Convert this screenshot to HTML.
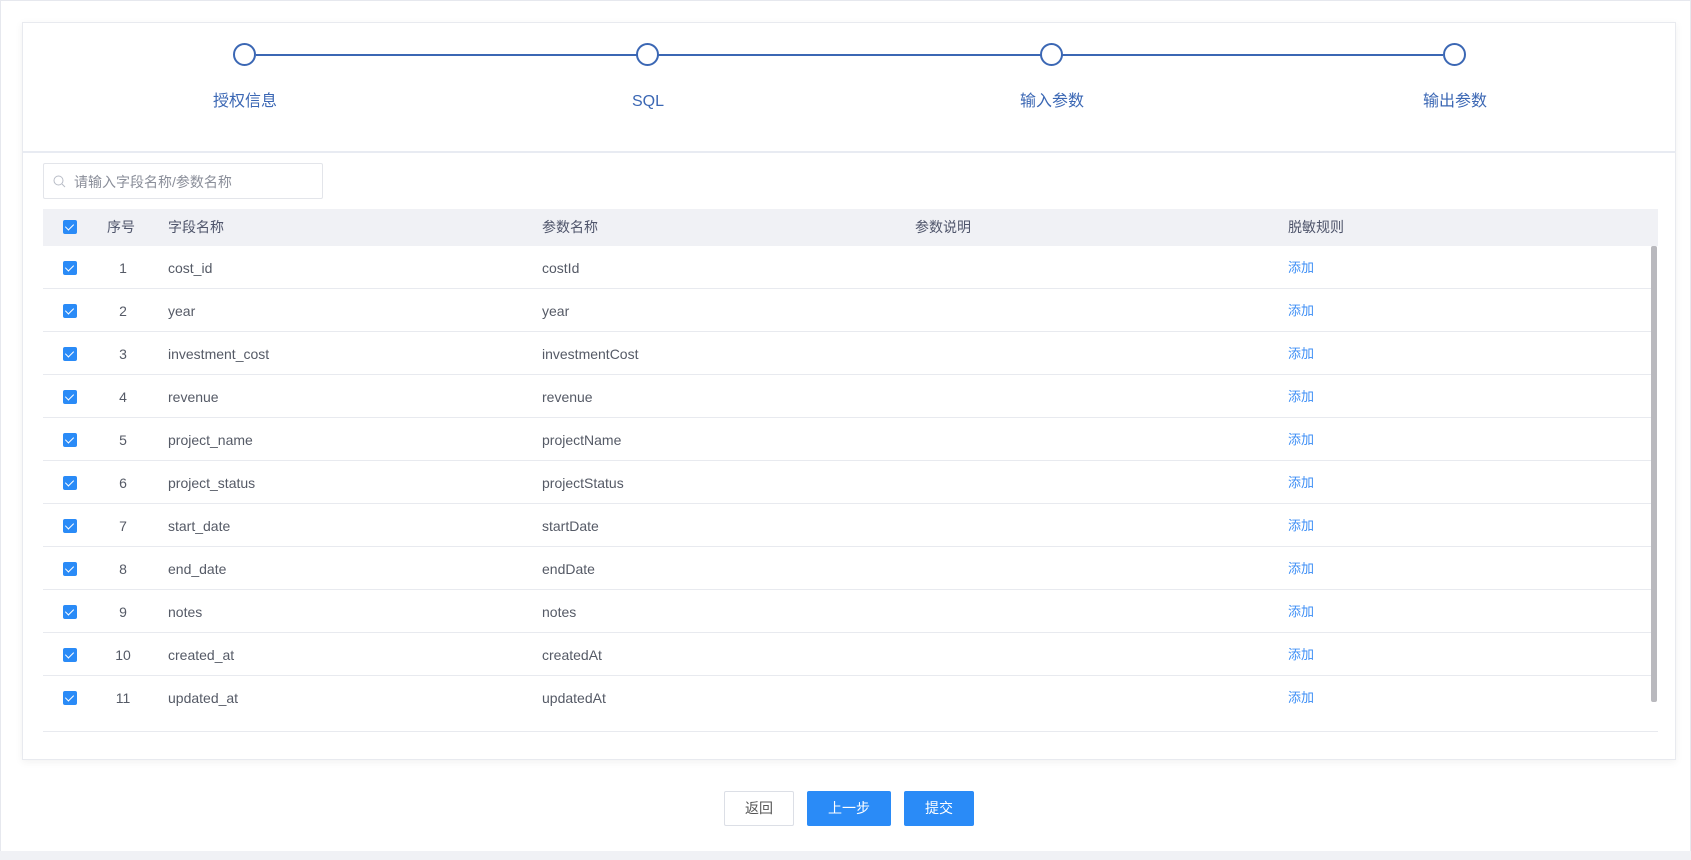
<!DOCTYPE html>
<html><head><meta charset="utf-8"><style>
*{margin:0;padding:0;box-sizing:border-box}
body{width:1691px;height:860px;background:#fff;font-family:"Liberation Sans","Noto Sans CJK SC",sans-serif;position:relative;overflow:hidden}
.frame{position:absolute;left:0;top:0;width:1691px;height:851px;border:1px solid #e6e8ee;border-bottom:none}
.bot{position:absolute;left:0;top:851px;width:1691px;height:9px;background:#f0f1f5}
.card{position:absolute;left:22px;top:22px;width:1654px;height:738px;background:#fff;border:1px solid #e8eaef;box-shadow:0 2px 8px rgba(0,0,0,.06)}
.hdr{position:absolute;left:0;top:0;width:100%;height:130px;border-bottom:2px solid #e8ebf2}
.line{position:absolute;top:30.5px;left:233px;width:1187px;height:2px;background:#3b67b4}
.c{position:absolute;top:20px;width:23px;height:23px;border:2px solid #3b67b4;border-radius:50%;background:#fff}
.lbl{position:absolute;top:68px;height:22px;line-height:22px;width:200px;margin-left:-100px;text-align:center;font-size:16px;color:#3b67b4}
.search{position:absolute;left:20px;top:140px;width:280px;height:36px;border:1px solid #e3e5ea;border-radius:2px}
.search span{position:absolute;left:30px;top:8px;line-height:20px;font-size:14px;color:#8a8e99}
.th{position:absolute;left:20px;top:186px;width:1615px;height:37px;background:#f0f1f5}
.th div{position:absolute;top:8px;line-height:20px;font-size:14px;color:#4f556b}
.cb{position:absolute;width:14px;height:14px;background:#2a8bf7;border-radius:2px}
.cb:after{content:"";position:absolute;left:4px;top:2px;width:4px;height:7px;border:solid #fff;border-width:0 1.5px 1.5px 0;transform:rotate(45deg)}
.row{position:absolute;left:20px;width:1608px;height:43px;border-bottom:1px solid #e8eaef}
.row div{position:absolute;top:12px;line-height:20px;font-size:14px;color:#555a66}
.row .n{left:60px;width:40px;text-align:center}
.row .a{color:#3d8ef5;font-size:13px}
.sb{position:absolute;left:1628px;top:223px;width:6px;height:456px;background:#b9b9be;border-radius:2px}
.bl{position:absolute;left:20px;top:708px;width:1615px;height:1px;background:#e8eaef}
.btn{position:absolute;top:791px;height:35px;border-radius:2px;font-size:14px;text-align:center;line-height:33px}
</style></head><body>
<div class="frame"></div><div class="bot"></div>
<div class="card">
<div class="hdr">
<div class="line"></div>
<div class="c" style="left:210px"></div><div class="c" style="left:613px"></div><div class="c" style="left:1017px"></div><div class="c" style="left:1420px"></div>
<div class="lbl" style="left:222px">授权信息</div><div class="lbl" style="left:625px">SQL</div><div class="lbl" style="left:1029px">输入参数</div><div class="lbl" style="left:1432px">输出参数</div>
</div>
<div class="search"><svg style="position:absolute;left:9px;top:11px" width="13" height="13" viewBox="0 0 13 13"><circle cx="5.5" cy="5.5" r="4.5" fill="none" stroke="#b8bcc6" stroke-width="1"/><line x1="9" y1="9" x2="12" y2="12" stroke="#b8bcc6"/></svg><span>请输入字段名称/参数名称</span></div>
<div class="th"><span class="cb" style="left:20px;top:11px"></span><div style="left:64px">序号</div><div style="left:125px">字段名称</div><div style="left:499px">参数名称</div><div style="left:872px">参数说明</div><div style="left:1245px">脱敏规则</div></div>
<div class="row" style="top:223px"><span class="cb" style="left:20px;top:15px"></span><div class="n">1</div><div style="left:125px">cost_id</div><div style="left:499px">costId</div><div class="a" style="left:1245px">添加</div></div>
<div class="row" style="top:266px"><span class="cb" style="left:20px;top:15px"></span><div class="n">2</div><div style="left:125px">year</div><div style="left:499px">year</div><div class="a" style="left:1245px">添加</div></div>
<div class="row" style="top:309px"><span class="cb" style="left:20px;top:15px"></span><div class="n">3</div><div style="left:125px">investment_cost</div><div style="left:499px">investmentCost</div><div class="a" style="left:1245px">添加</div></div>
<div class="row" style="top:352px"><span class="cb" style="left:20px;top:15px"></span><div class="n">4</div><div style="left:125px">revenue</div><div style="left:499px">revenue</div><div class="a" style="left:1245px">添加</div></div>
<div class="row" style="top:395px"><span class="cb" style="left:20px;top:15px"></span><div class="n">5</div><div style="left:125px">project_name</div><div style="left:499px">projectName</div><div class="a" style="left:1245px">添加</div></div>
<div class="row" style="top:438px"><span class="cb" style="left:20px;top:15px"></span><div class="n">6</div><div style="left:125px">project_status</div><div style="left:499px">projectStatus</div><div class="a" style="left:1245px">添加</div></div>
<div class="row" style="top:481px"><span class="cb" style="left:20px;top:15px"></span><div class="n">7</div><div style="left:125px">start_date</div><div style="left:499px">startDate</div><div class="a" style="left:1245px">添加</div></div>
<div class="row" style="top:524px"><span class="cb" style="left:20px;top:15px"></span><div class="n">8</div><div style="left:125px">end_date</div><div style="left:499px">endDate</div><div class="a" style="left:1245px">添加</div></div>
<div class="row" style="top:567px"><span class="cb" style="left:20px;top:15px"></span><div class="n">9</div><div style="left:125px">notes</div><div style="left:499px">notes</div><div class="a" style="left:1245px">添加</div></div>
<div class="row" style="top:610px"><span class="cb" style="left:20px;top:15px"></span><div class="n">10</div><div style="left:125px">created_at</div><div style="left:499px">createdAt</div><div class="a" style="left:1245px">添加</div></div>
<div class="row" style="top:653px;border-bottom:none"><span class="cb" style="left:20px;top:15px"></span><div class="n">11</div><div style="left:125px">updated_at</div><div style="left:499px">updatedAt</div><div class="a" style="left:1245px">添加</div></div>
<div class="sb"></div>
<div class="bl"></div>
</div>
<div class="btn" style="left:724px;width:70px;border:1px solid #dcdfe6;color:#555">返回</div>
<div class="btn" style="left:807px;width:84px;background:#2a8bf7;color:#fff;line-height:35px">上一步</div>
<div class="btn" style="left:904px;width:70px;background:#2a8bf7;color:#fff;line-height:35px">提交</div>
</body></html>
